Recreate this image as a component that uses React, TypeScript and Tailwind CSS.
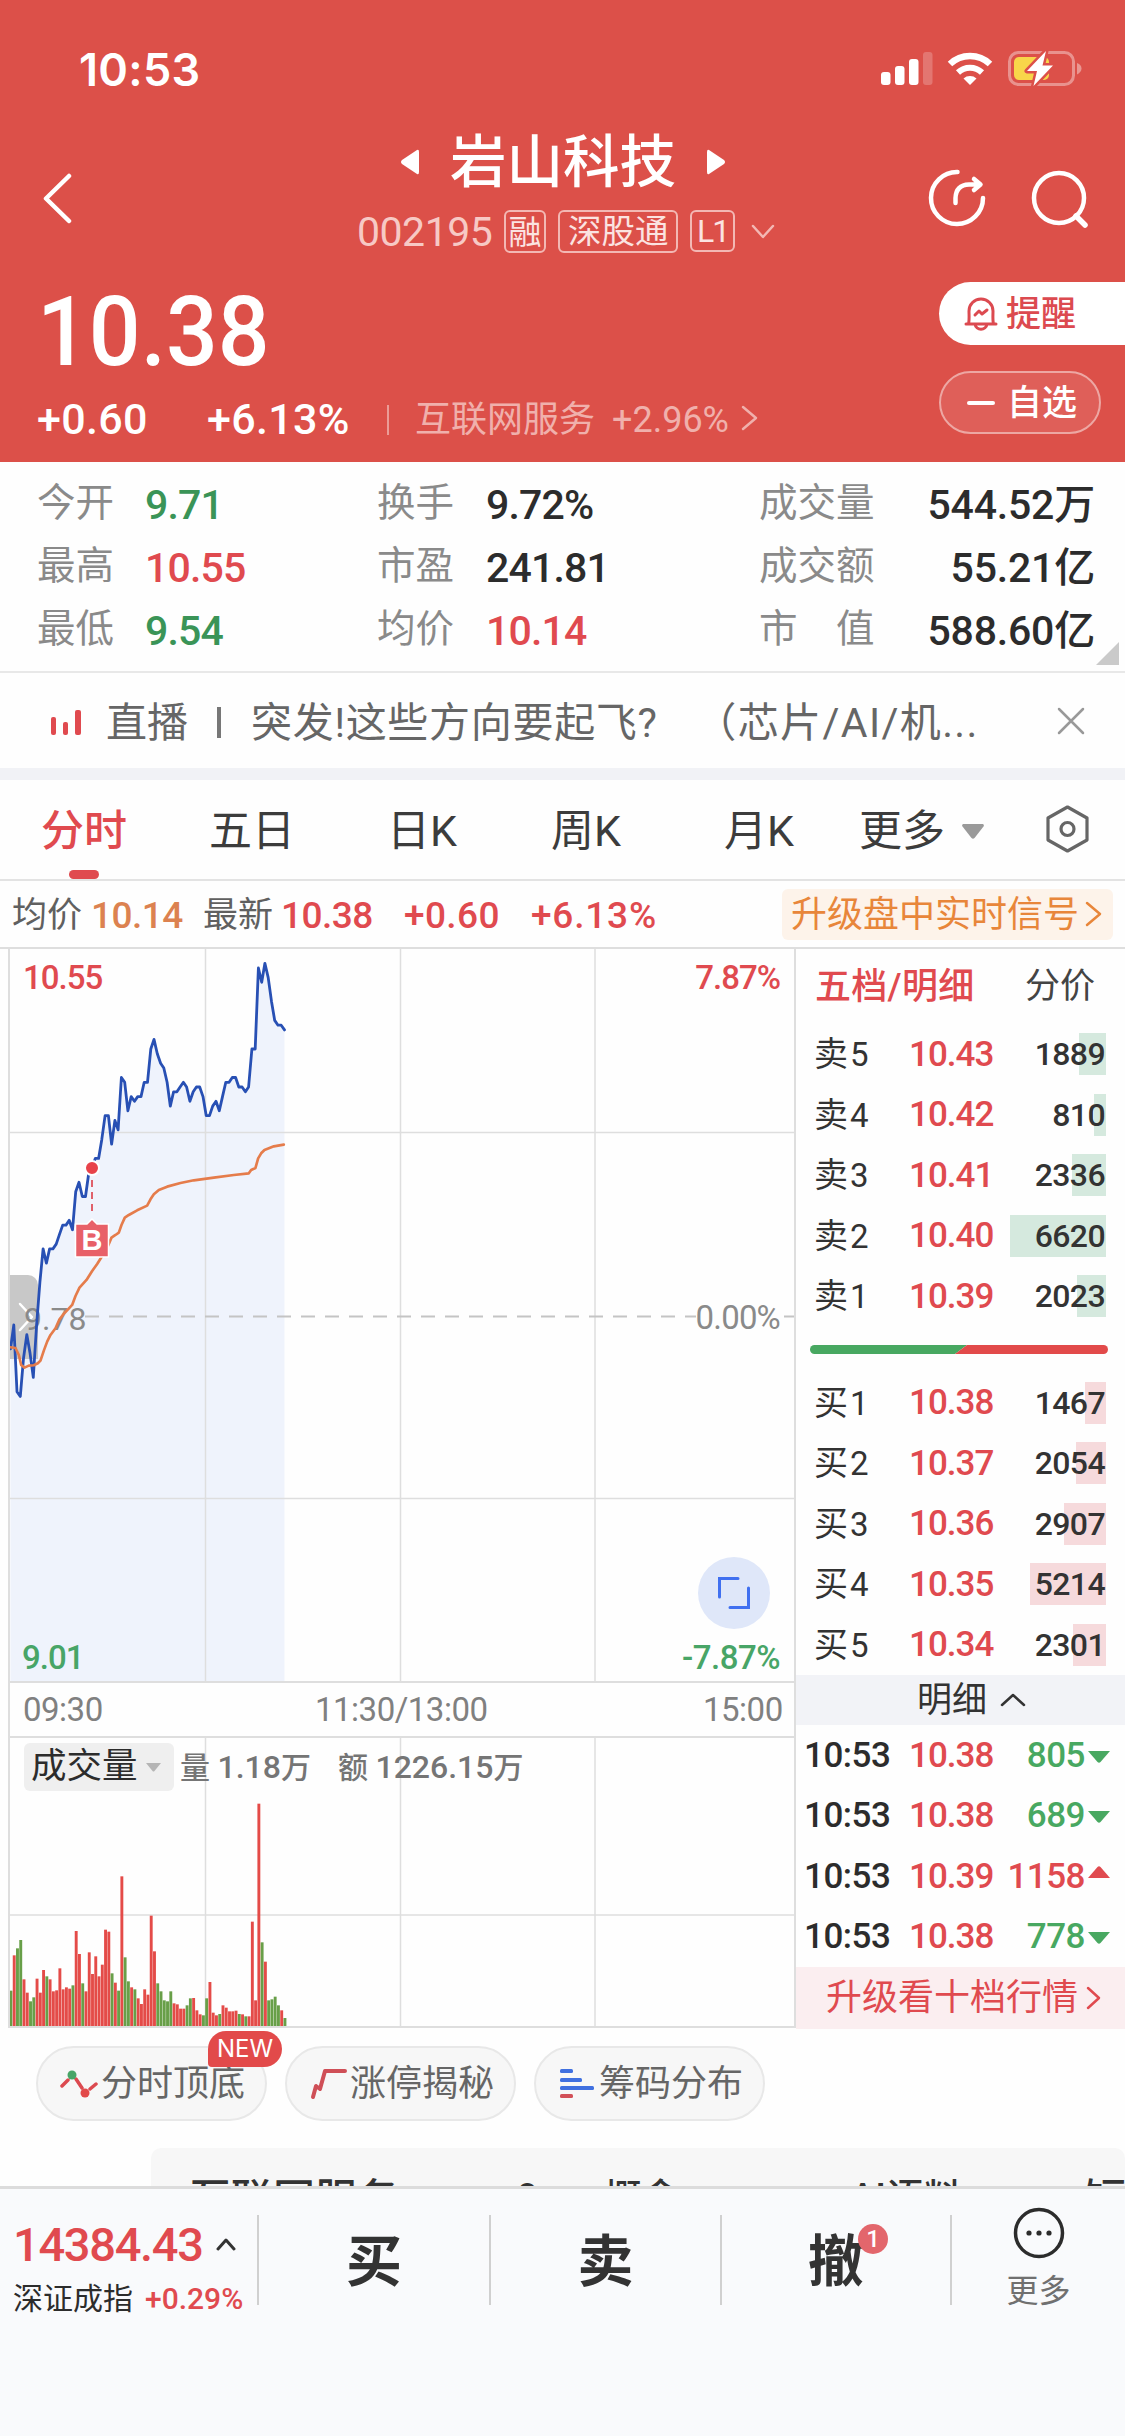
import React from "react";

const stats = [
  ["今开", "9.71", "text-[#3a9457]", "换手", "9.72%", "text-[#2c2c2c]", "成交量", "544.52万"],
  ["最高", "10.55", "text-[#e04a4f]", "市盈", "241.81", "text-[#2c2c2c]", "成交额", "55.21亿"],
  ["最低", "9.54", "text-[#3a9457]", "均价", "10.14", "text-[#e04a4f]", "市　值", "588.60亿"],
];

const asks = [
  { label: "卖5", price: "10.43", vol: 1889, w: 27 },
  { label: "卖4", price: "10.42", vol: 810, w: 12 },
  { label: "卖3", price: "10.41", vol: 2336, w: 34 },
  { label: "卖2", price: "10.40", vol: 6620, w: 96 },
  { label: "卖1", price: "10.39", vol: 2023, w: 29 },
];

const bids = [
  { label: "买1", price: "10.38", vol: 1467, w: 21 },
  { label: "买2", price: "10.37", vol: 2054, w: 30 },
  { label: "买3", price: "10.36", vol: 2907, w: 42 },
  { label: "买4", price: "10.35", vol: 5214, w: 76 },
  { label: "买5", price: "10.34", vol: 2301, w: 33 },
];

const ticks = [
  { price: "10.38", vol: 805, up: false },
  { price: "10.38", vol: 689, up: false },
  { price: "10.39", vol: 1158, up: true },
  { price: "10.38", vol: 778, up: false },
];

// one price per minute since 09:30
const prices = [
  9.71, 9.76, 9.62, 9.61, 9.69, 9.74, 9.7, 9.65, 9.76, 9.85, 9.92, 9.89, 9.92, 9.92, 9.93, 9.95, 9.97, 9.97, 9.98, 9.96,
  10.04, 10.06, 10.03, 10.03, 10.08, 10.09, 10.11, 10.11, 10.15, 10.2, 10.2, 10.14, 10.19, 10.17, 10.28, 10.27, 10.21,
  10.24, 10.23, 10.24, 10.24, 10.27, 10.27, 10.34, 10.36, 10.33, 10.31, 10.3, 10.27, 10.22, 10.25, 10.25, 10.26, 10.27,
  10.26, 10.23, 10.25, 10.26, 10.26, 10.24, 10.2, 10.2, 10.22, 10.23, 10.21, 10.24, 10.27, 10.27, 10.28, 10.28, 10.26,
  10.26, 10.25, 10.26, 10.34, 10.34, 10.51, 10.48, 10.52, 10.49, 10.44, 10.4, 10.39, 10.39, 10.38,
];

const avgPoints =
  "30,1222 45,1224 55,1245 62,1275 72,1283 85,1277 100,1276 112,1270 120,1262 130,1232 140,1205 150,1185 165,1165 177,1138 190,1122 215,1095 225,1068 237,1043 258,1020 275,993 290,972 305,948 315,935 333,893 345,885 355,878 363,855 373,833 385,825 410,811 440,797 450,778 460,763 475,750 500,740 540,729 580,721 640,713 700,705 745,700 752,690 765,684 773,655 782,640 792,630 820,619 850,614";

// positive = up minute, negative = down minute
const volumes = [
  -106, 212, -233, -258, 140, 100, -74, -86, 142, 100, 168, -149, 140, 104, 107, 173, 110, 116, 112, -122, 285, 216,
  -128, 104, 221, 156, 209, 149, 184, 289, 283, -158, 130, -106, 449, -206, -134, 116, -110, 83, 66, 110, 94, 331, 224,
  -128, -104, -77, -74, -104, 68, 65, 52, 52, -62, -83, 84, 47, 35, -32, -83, 132, 40, 32, -36, 62, 55, 44, 44, 46, -36,
  35, -29, 29, 313, 77, 667, -251, 193, -77, -80, -88, -62, 47, -24,
];

const STEP = 3.262;
const linePoints = prices.map((p, i) => `${(i * STEP + 0.5).toFixed(1)},${((10.55 - p) * 476).toFixed(1)}`).join(" ");

function Chevron({ d, w, h, className, sw = 2.5 }: { d: string; w: number; h: number; className?: string; sw?: number }) {
  return (
    <svg width={w} height={h} viewBox={`0 0 ${w} ${h}`} fill="none" stroke="currentColor" strokeWidth={sw} strokeLinecap="round" strokeLinejoin="round" className={className}>
      <path d={d} />
    </svg>
  );
}

function StatusBar() {
  return (
    <div className="flex h-[138px] items-center justify-between pl-[79px] pr-[43px]">
      <span className="font-['Inter',sans-serif] text-[45px] font-semibold leading-none tracking-[0.3px]">10:53</span>
      <svg width="201" height="38" viewBox="0 0 201 38" fill="#fff">
        <rect x="0" y="22" width="9.5" height="13" rx="3" />
        <rect x="14" y="16" width="9.5" height="19" rx="3" />
        <rect x="28" y="9" width="9.5" height="26" rx="3" />
        <rect x="42" y="2" width="9.5" height="33" rx="3" opacity="0.22" />
        <path d="M69 14a29 29 0 0 1 40 0" fill="none" stroke="#fff" strokeWidth="6.5" />
        <path d="M77 22.5a17.500 17.500 0 0 1 24 0" fill="none" stroke="#fff" strokeWidth="6" />
        <path d="M82.5 28.5a10 10 0 0 1 13 0L89 35z" />
        <rect x="128.500" y="2.500" width="64" height="32" rx="9" fill="none" stroke="#fff" strokeOpacity="0.38" strokeWidth="3" />
        <path d="M196 13c6 2 6 9 0 11.500z" opacity="0.4" />
        <rect x="133" y="7" width="35" height="23" rx="5" fill="#f8d64a" />
        <path d="M165 1L146 21h10l-3.500 15L172 15.500H161.500z" stroke="#dc5049" strokeWidth="5" strokeLinejoin="round" paintOrder="stroke" />
      </svg>
    </div>
  );
}

function Header() {
  return (
    <header className="h-[462px] shrink-0 bg-[#dc5049] text-white">
      <StatusBar />
      <div className="flex h-[138px]">
        <div className="flex h-[120px] w-[357px] items-center pl-[43px]">
          <Chevron d="M26 3L3 25.500L26 48" w={29} h={51} sw={4.500} />
        </div>
        <div className="w-[418px]">
          <div className="flex h-[48px] items-center pl-[44px]">
            <svg width="18" height="26" viewBox="0 0 18 26" fill="#fff"><path d="M16 1q2-1 2 2v20q0 3-2 2L1 15q-2-2 0-4z" /></svg>
            <span className="ml-[31px] w-[257px] whitespace-nowrap pt-[2px] text-[56.500px] font-medium leading-none">岩山科技</span>
            <svg width="18" height="26" viewBox="0 0 18 26" fill="#fff"><path d="M2 1Q0 0 0 3v20q0 3 2 2L17 15q2-2 0-4z" /></svg>
          </div>
          <div className="flex h-[90px] items-center leading-none">
            <span className="w-[147px] pt-[3px] text-[41px] tracking-[-0.500px] text-[#f7c9c5]">002195</span>
            <span className="flex h-[43px] w-[43px] items-center justify-center rounded-[6px] border-2 border-[#f3b8b4] pt-[2px] text-[33px] text-[#fbe3e1]">融</span>
            <span className="ml-[12px] flex h-[43px] w-[120px] items-center justify-center rounded-[6px] border-2 border-[#f3b8b4] pt-[2px] text-[33.500px] text-[#fbe3e1]">深股通</span>
            <span className="ml-[12px] flex h-[42px] w-[45px] items-center justify-center rounded-[6px] border-2 border-[#f3b8b4] text-[32px] tracking-[-2px] text-[#fbe3e1]">L1</span>
            <Chevron d="M2 2l10 11L22 2" w={24} h={15} className="ml-[16px] text-[#f3b8b4]" />
          </div>
        </div>
        <div className="flex h-[120px] items-center pl-[152px]">
          <svg width="60" height="60" viewBox="0 0 60 60" fill="none" stroke="#fff" strokeWidth="4.500" strokeLinecap="round" strokeLinejoin="round">
            <path d="M30.500 4A26 26 0 1 0 56 30" />
            <path d="M28.500 35V30Q29 17 42 16.500H52M47 11l6.500 5.500L47 22" />
          </svg>
          <svg width="60" height="60" viewBox="0 0 60 60" fill="none" stroke="#fff" strokeWidth="4.500" strokeLinecap="round" className="ml-[44px]">
            <circle cx="28" cy="30" r="25" />
            <path d="M45 48l9 9" strokeWidth="5.500" />
          </svg>
        </div>
      </div>
      <div className="flex h-[186px] justify-between">
        <div>
          <div className="flex h-[108px] items-center pl-[37px] pt-[4px]">
            <span className="origin-left scale-x-[0.94] text-[97px] font-medium leading-none">10.38</span>
          </div>
          <div className="flex h-[69px] items-center whitespace-nowrap pl-[37px] pt-[2px] leading-none">
            <span className="w-[170px] text-[43px] font-medium tracking-[0.300px]">+0.60</span>
            <span className="w-[180px] text-[43px] font-medium tracking-[0.300px]">+6.13%</span>
            <span className="h-[30px] w-[2px] bg-[#eb9c97]" />
            <span className="ml-[26px] w-[197px] text-[36px] text-[#f0b0ac]">互联网服务</span>
            <span className="w-[129px] text-[36px] text-[#f0b0ac]">+2.96%</span>
            <Chevron d="M2 2l13 11L2 24" w={17} h={26} className="-mt-[3px] text-[#f0b0ac]" />
          </div>
        </div>
        <div className="w-[186px] pt-[6px] text-[35px] font-medium leading-none">
          <div className="flex h-[63px] items-center rounded-l-full bg-white pl-[25px] text-[#dc4a50]">
            <svg width="34" height="36" viewBox="0 0 34 36" fill="none" stroke="currentColor" strokeWidth="3" strokeLinecap="round" strokeLinejoin="round">
              <path d="M2 28h30M4.500 28c1-4 .5-9 .5-13a12 12 0 0 1 24 0c0 4-.5 9 .5 13M11 28c1 7 11 7 12 0" />
              <path d="M11 19l4-4 3 3 5-4" />
            </svg>
            <span className="ml-[8px] pt-[2px]">提醒</span>
          </div>
          <div className="mt-[26px] flex h-[63px] w-[162px] items-center rounded-full border-2 border-[#eda7a3] bg-[#df5f59] pl-[26px]">
            <span className="h-[4px] w-[28px] rounded-full bg-white" />
            <span className="ml-[12px] pt-[2px]">自选</span>
          </div>
        </div>
      </div>
    </header>
  );
}

function Stats() {
  return (
    <section className="relative h-[211px] shrink-0 border-b-2 border-[#e8e8e8] pt-[12px]">
      {stats.map((r) => (
        <div key={r[0]} className="grid h-[63px] grid-cols-[108px_232px_109px_273px_115px_221px] items-center whitespace-nowrap pl-[37px] text-[38.500px] leading-none text-[#8a8a8a]">
          <span className="-mt-1">{r[0]}</span>
          <span className={`text-[41px] font-medium tracking-[-0.800px] ${r[2]}`}>{r[1]}</span>
          <span className="-mt-1">{r[3]}</span>
          <span className={`text-[41px] font-medium tracking-[-0.800px] ${r[5]}`}>{r[4]}</span>
          <span className="-mt-1">{r[6]}</span>
          <span className="text-right text-[41px] font-medium tracking-[-0.200px] text-[#2c2c2c]">{r[7]}</span>
        </div>
      ))}
      <svg width="23" height="23" viewBox="0 0 23 23" className="absolute bottom-[6px] right-[6px]"><path d="M23 0v23H0z" fill="#cacaca" /></svg>
    </section>
  );
}

function LiveBar() {
  return (
    <section className="flex h-[95px] shrink-0 items-center whitespace-nowrap pl-[51px] text-[41px] leading-none text-[#666]">
      <svg width="31" height="26" viewBox="0 0 31 26" fill="#e04a4f" className="mt-[4px]">
        <rect x="0" y="7" width="5" height="18" rx="2" />
        <rect x="12" y="12" width="5" height="13" rx="2" />
        <rect x="24" y="0" width="6" height="25" rx="2" />
      </svg>
      <span className="ml-[24px] w-[111px] pt-[5px]">直播</span>
      <span className="mt-[3px] h-[31px] w-[4px] bg-[#777]" />
      <span className="ml-[30px] w-[806px] pt-[5px] tracking-[0.700px]">
        突发!这些方向要起飞?<span className="ml-[26px] tracking-[1.400px]"> （芯片/AI/机...</span>
      </span>
      <Chevron d="M2 2l24 24M26 2L2 26" w={28} h={28} className="text-[#999]" />
    </section>
  );
}

function Tabs() {
  return (
    <nav className="relative grid h-[101px] shrink-0 grid-cols-[168px_178px_164px_173px_135px_186px_60px] items-center whitespace-nowrap border-b-2 border-[#e3e3e3] pl-[41px] text-[43px] leading-none text-[#3c3c3c]">
      <span className="pt-[3px] font-medium text-[#e04a4f]">分时</span>
      <span className="pt-[3px]">五日</span>
      <span className="pt-[3px]">日K</span>
      <span className="pt-[3px]">周K</span>
      <span className="pt-[3px]">月K</span>
      <span className="flex items-center pt-[3px]">
        更多
        <svg width="22" height="15" viewBox="0 0 22 15" className="ml-[17px]"><path d="M1 0h20q1.500 1 .5 2.500L12.500 14q-1.500 1.500-3 0L.5 2.500Q-.5 1 1 0z" fill="#9a9a9a" /></svg>
      </span>
      <svg width="43" height="48" viewBox="0 0 43 48" fill="none" stroke="#666" strokeWidth="3.200" strokeLinejoin="round" className="-mt-[2px] ml-[1px]">
        <path d="M21.500 2L41 13v22L21.500 46 2 35V13z" />
        <circle cx="21.500" cy="24" r="6.500" />
      </svg>
      <span className="absolute bottom-0 left-[69px] h-[9px] w-[30px] rounded-full bg-[#e04a4f]" />
    </nav>
  );
}

function InfoRow() {
  return (
    <div className="flex h-[66px] shrink-0 items-center whitespace-nowrap pl-[12px] text-[35px] leading-none text-[#606060]">
      <span className="w-[79px] pt-[3px]">均价</span>
      <span className="w-[112px] pt-[3px] text-[37px] font-medium tracking-[-0.500px] text-[#dc8250]">10.14</span>
      <span className="w-[78px] pt-[3px]">最新</span>
      <span className="w-[123px] pt-[3px] text-[37px] font-medium tracking-[-0.500px] text-[#e04a4f]">10.38</span>
      <span className="w-[127px] pt-[3px] text-[37px] font-medium tracking-[0.400px] text-[#e04a4f]">+0.60</span>
      <span className="w-[251px] pt-[3px] text-[37px] font-medium tracking-[0.800px] text-[#e04a4f]">+6.13%</span>
      <span className="flex h-[51px] w-[331px] items-center rounded-[6px] bg-[#fdf3ea] pl-[9px] text-[36px] text-[#e8863a]">
        <span className="pt-[2px]">升级盘中实时信号</span>
        <Chevron d="M2 2l13 11L2 24" w={17} h={26} className="ml-[6px]" />
      </span>
    </div>
  );
}

function PriceChart() {
  return (
    <div className="relative h-[732px] text-[33px] leading-none">
      <svg width="785" height="732" viewBox="0 0 785 732" className="absolute inset-0">
        <polygon points={`0.500,732 ${linePoints} 274.500,732`} fill="#eff3fc" />
        <g stroke="#dedede" strokeWidth="1.500">
          <path d="M195.500 0V732M390.500 0V732M585 0V732M0 183.500H785M0 549.500H785" />
          <path d="M75 367.500H686" stroke="#c4c4c4" strokeWidth="2" strokeDasharray="14 10" />
          <path d="M774 367.500h10" stroke="#c4c4c4" strokeWidth="2" />
        </g>
      </svg>
      <div className="absolute left-0 top-[326px] flex h-[84px] w-[28px] items-center justify-end rounded-tr-[10px] bg-[#c8c8c8]">
        <Chevron d="M2 2l12 13L2 28" w={20} h={30} className="text-white" />
      </div>
      <span className="absolute left-[14px] top-[354px] text-[32px] text-[#8a8a8a]">9.78</span>
      <svg width="785" height="732" viewBox="0 0 785 732" fill="none" strokeLinejoin="round" strokeLinecap="round" className="absolute inset-0">
        <polyline points={linePoints} stroke="#2850b4" strokeWidth="2.800" />
        <polyline points={avgPoints} transform="translate(-9.500 -9) scale(0.3333)" stroke="#e57c4b" strokeWidth="8" />
        <path d="M82 231v36" stroke="#e0606a" strokeWidth="2" strokeDasharray="7 5" strokeLinecap="butt" />
        <circle cx="82" cy="219" r="7" fill="#e8434a" stroke="#fff" strokeWidth="2" />
        <path d="M65.500 275h11.500l5-5 5 5h11.500v33H65.500z" fill="#e86068" stroke="#fff" strokeWidth="1.500" />
      </svg>
      <span className="absolute left-[66px] top-[277px] w-[32px] text-center font-['Liberation_Sans',sans-serif] text-[29px] font-bold text-white">B</span>
      <span className="absolute left-[13px] top-[12px] text-[33px] font-medium tracking-[-1px] text-[#e04a4f]">10.55</span>
      <span className="absolute right-[14px] top-[12px] font-medium tracking-[-1px] text-[#e04a4f]">7.87%</span>
      <span className="absolute right-[14px] top-[352px] tracking-[-0.800px] text-[#8a8a8a]">0.00%</span>
      <span className="absolute bottom-[7px] left-[12px] font-medium tracking-[-1px] text-[#48a567]">9.01</span>
      <span className="absolute bottom-[7px] right-[14px] font-medium tracking-[-0.500px] text-[#48a567]">-7.87%</span>
      <div className="absolute left-[688px] top-[608px] flex h-[72px] w-[72px] items-center justify-center rounded-full bg-[#dfe7f9]">
        <svg width="34" height="34" viewBox="0 0 34 34" fill="none" stroke="#4070f0" strokeWidth="3" strokeLinecap="round">
          <path d="M2.500 21V2.500H21M31.500 12V31.500H13" />
        </svg>
      </div>
    </div>
  );
}

function VolumeChart() {
  return (
    <div className="relative h-[288px]">
      <svg width="785" height="288" viewBox="0 0 785 288" className="absolute inset-0">
        <path d="M195.500 0V288M390.500 0V288M585 0V288M0 177H785" stroke="#dedede" strokeWidth="1.500" />
        {volumes.map((v, i) => (
          <rect key={i} x={i * STEP - 0.5} y={288 - Math.abs(v) / 3} width="2.900" height={Math.abs(v) / 3} fill={v > 0 ? "#e44b48" : "#689f48"} />
        ))}
      </svg>
      <div className="relative flex items-center whitespace-nowrap pl-[14px] pt-[5px] text-[30px] font-medium leading-none text-[#757575]">
        <div className="flex h-[48px] w-[150px] items-center rounded-[6px] bg-[#efefef] pl-[7px] text-[35.500px] font-normal text-[#2c2c2c]">
          成交量
          <svg width="15" height="9" viewBox="0 0 15 9" className="ml-[8px]"><path d="M0 0h15L8.500 8q-1 1-2 0z" fill="#b5b5b5" /></svg>
        </div>
        <span className="ml-[6px] w-[158px]">量 <span className="text-[32px]">1.18</span>万</span>
        <span>额 <span className="text-[32px]">1226.15</span>万</span>
      </div>
    </div>
  );
}

function OrderRow({ row, bar }: { row: { label: string; price: string; vol: number; w: number }; bar: string }) {
  return (
    <div className="grid h-[60.500px] grid-cols-[95px_112px_85px] items-center pl-[18px] leading-none">
      <span className="whitespace-nowrap text-[34px] text-[#333]">
        {row.label[0]}
        <span className="ml-[2px] text-[33px]">{row.label[1]}</span>
      </span>
      <span className="text-[35px] font-medium tracking-[-1px] text-[#e04a4f]">{row.price}</span>
      <div className="relative flex h-[42px] items-center justify-end">
        <span className={`absolute right-0 top-0 h-[42px] ${bar}`} style={{ width: row.w }} />
        <span className="relative pr-px text-[32px] font-medium tracking-[-0.600px] text-[#333]">{row.vol}</span>
      </div>
    </div>
  );
}

function OrderBook() {
  return (
    <aside className="w-[331px] shrink-0 border-l-2 border-[#dedede]">
      <div className="flex h-[75px] items-center whitespace-nowrap pl-[19px] leading-none">
        <span className="w-[210px] text-[36px] font-medium tracking-[0.300px] text-[#e04a4f]">五档/明细</span>
        <span className="text-[35px] text-[#444]">分价</span>
      </div>
      {asks.map((r) => <OrderRow key={r.label} row={r} bar="bg-[#d5e9de]" />)}
      <div className="flex h-[46px] items-center pl-[14px]">
        <svg width="298" height="9" viewBox="0 0 298 9">
          <path d="M4.500 0H157L145 9H4.500a4.500 4.500 0 0 1 0-9z" fill="#48a861" />
          <path d="M157 0h136.500a4.500 4.500 0 0 1 0 9H145z" fill="#e24a4a" />
        </svg>
      </div>
      {bids.map((r) => <OrderRow key={r.label} row={r} bar="bg-[#f6dadc]" />)}
      <div className="flex h-[50px] items-center justify-center bg-[#f2f3f7] pl-[22px] text-[35px] leading-none text-[#333]">
        明细
        <Chevron d="M2 12L13 2l11 10" w={26} h={14} className="ml-[13px]" />
      </div>
      <div className="h-[242px]">
        {ticks.map((t, i) => (
          <div key={i} className="flex h-[60.500px] items-center text-[35px] font-medium leading-none tracking-[-0.500px]">
            <span className="ml-[8px] w-[105px] text-[#2c2c2c]">10:53</span>
            <span className="w-[82px] tracking-[-1px] text-[#e04a4f]">{t.price}</span>
            <span className={`w-[94px] text-right ${t.up ? "text-[#e04a4f]" : "text-[#48a861]"}`}>{t.vol}</span>
            <svg width="22" height="12" viewBox="0 0 22 12" className={`ml-[3px] shrink-0 ${t.up ? "mb-[8px] rotate-180" : "mt-[3px]"}`}>
              <path d="M0 0h22L12.500 11q-1.500 1.500-3 0z" fill={t.up ? "#e04a4f" : "#48a861"} />
            </svg>
          </div>
        ))}
      </div>
      <div className="flex h-[62px] items-center whitespace-nowrap bg-[#fbeef0] pl-[30px] text-[36px] leading-none text-[#e04a4f]">
        升级看十档行情
        <Chevron d="M2 2l11 10L2 22" w={15} h={24} className="ml-[8px]" />
      </div>
    </aside>
  );
}

const chip = "relative flex h-[75px] w-[231px] items-center rounded-full border-2 border-[#e8e8e8] bg-[#f7f7f7]";

function Tools() {
  return (
    <div className="flex h-[120px] shrink-0 gap-[18px] whitespace-nowrap pl-[36px] pt-[18px] text-[36px] leading-none text-[#666]">
      <div className={chip}>
        <svg width="38" height="30" viewBox="0 0 38 30" fill="none" stroke="#dc4a50" strokeWidth="3.500" strokeLinecap="round" className="ml-[22px]">
          <path d="M2 17l6-6M16 10l6 9M30 20l6-5" />
          <circle cx="12" cy="6" r="4.500" fill="#48a567" stroke="none" />
          <circle cx="25" cy="24" r="4.500" fill="#e24a4a" stroke="none" />
        </svg>
        <span className="ml-[3px] pt-px">分时顶底</span>
        <span className="absolute -top-[17px] left-[170px] flex h-[36px] w-[74px] items-center justify-center rounded-[18px] rounded-bl-[4px] bg-[#e24a4a] font-['Inter',sans-serif] text-[24px] text-white">NEW</span>
      </div>
      <div className={chip}>
        <svg width="38" height="32" viewBox="0 0 38 32" fill="none" stroke="#cf4f57" strokeWidth="4" strokeLinecap="round" strokeLinejoin="round" className="ml-[23px]">
          <path d="M3 29L6 18l4 3L15 3H35" />
        </svg>
        <span className="ml-[2px] pt-px">涨停揭秘</span>
      </div>
      <div className={chip}>
        <svg width="34" height="30" viewBox="0 0 34 30" className="ml-[24px]">
          <g fill="#4070e0">
            <rect y="0" width="13" height="4" rx="1.500" />
            <rect y="9" width="22" height="4" rx="1.500" />
            <rect y="17" width="34" height="4" rx="1.500" />
          </g>
          <rect y="25" width="13" height="4" rx="1.500" fill="#d25058" />
        </svg>
        <span className="ml-[5px] pt-px">筹码分布</span>
      </div>
    </div>
  );
}

function BottomBar() {
  return (
    <footer className="flex flex-1 border-t-[3px] border-[#dcdcdc] bg-[#f9fafc] pt-[26px] leading-none">
      <div className="w-[257px] shrink-0 whitespace-nowrap pl-[13px] pt-[5px]">
        <div className="flex h-[46px] items-center pt-[2px]">
          <span className="w-[203px] text-[47px] font-medium tracking-[-1.300px] text-[#e04a4f]">14384.43</span>
          <Chevron d="M2 11l8-9 8 9" w={20} h={13} sw={3} className="text-[#333]" />
        </div>
        <div className="mt-[16px] flex h-[34px] items-center">
          <span className="w-[132px] text-[30px] text-[#2c2c2c]">深证成指</span>
          <span className="text-[30px] font-medium text-[#e04a4f]">+0.29%</span>
        </div>
      </div>
      <div className="flex h-[90px] w-[695px] text-[56px] font-bold text-[#333]">
        <div className="flex w-[232px] items-center justify-center border-l-2 border-[#d0d0d0] pt-[4px]">买</div>
        <div className="flex w-[231px] items-center justify-center border-l-2 border-[#d0d0d0] pt-[4px]">卖</div>
        <div className="relative flex w-[232px] items-center justify-center border-x-2 border-[#d0d0d0] pt-[4px]">
          撤
          <span className="absolute left-[136px] top-[9px] flex h-[30px] w-[30px] items-center justify-center rounded-full bg-[#e3666c] text-[24px] font-medium text-white">1</span>
        </div>
      </div>
      <div className="flex flex-1 flex-col items-center text-[32px] text-[#707070]">
        <svg width="52" height="52" viewBox="0 0 52 52" className="-mt-[8px]">
          <circle cx="26" cy="26" r="23.500" fill="none" stroke="#2c2c2c" strokeWidth="3.500" />
          <g fill="#2c2c2c">
            <circle cx="16" cy="26" r="2.600" />
            <circle cx="26" cy="26" r="2.600" />
            <circle cx="36" cy="26" r="2.600" />
          </g>
        </svg>
        <span className="mt-[16px]">更多</span>
      </div>
    </footer>
  );
}

export default function App() {
  return (
    <div className="flex h-[2436px] w-[1125px] flex-col overflow-hidden bg-[#fefefe] font-['Roboto','Noto_Sans_CJK_SC',sans-serif]">
      <Header />
      <Stats />
      <LiveBar />
      <div className="h-[12px] shrink-0 bg-[#f1f2f6]" />
      <Tabs />
      <InfoRow />
      <div className="flex h-[1081px] shrink-0 border-t-2 border-[#dedede]">
        <div className="ml-[8px] w-[786px] shrink-0 border-b-2 border-l-2 border-[#dedede]">
          <PriceChart />
          <div className="flex h-[57px] items-center border-y-2 border-[#dedede] pl-[13px] text-[33px] leading-none tracking-[-0.500px] text-[#808080]">
            <span className="w-[292px]">09:30</span>
            <span className="w-[388px]">11:30/13:00</span>
            <span>15:00</span>
          </div>
          <VolumeChart />
        </div>
        <OrderBook />
      </div>
      <Tools />
      <div className="ml-[151px] h-[38px] shrink-0 overflow-hidden rounded-t-[10px] bg-[#f7f7f7] pl-[38px] pt-[31px]">
        <div className="grid grid-cols-[328px_87px_246px_234px_60px] whitespace-nowrap text-[42px] font-medium leading-none text-[#333]">
          <span>互联网服务</span>
          <span className="text-[30px]">Q</span>
          <span className="text-[38px]">概念</span>
          <span className="text-[38px]">AI语料</span>
          <span>短</span>
        </div>
      </div>
      <BottomBar />
    </div>
  );
}
